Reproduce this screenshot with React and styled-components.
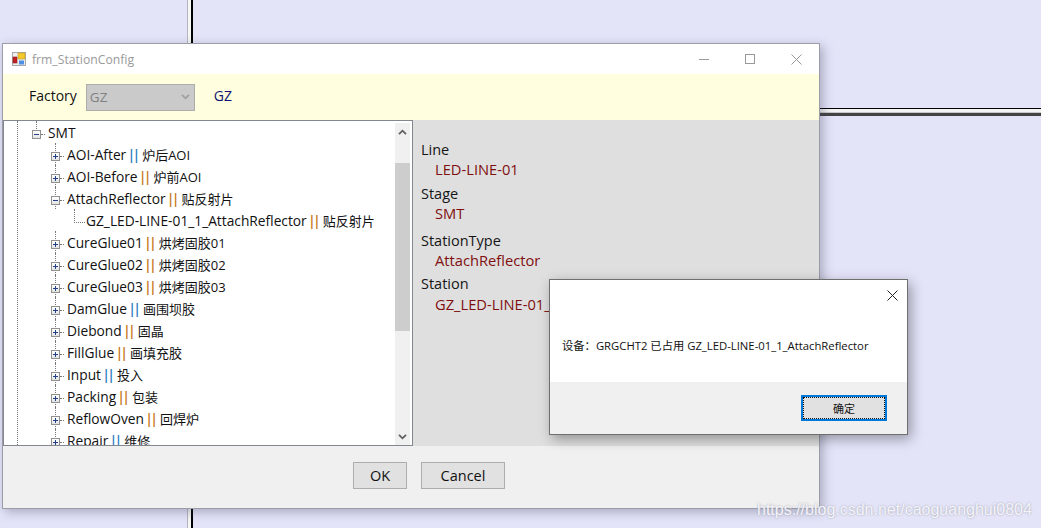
import styled, { createGlobalStyle } from "styled-components"

const GlobalStyle = createGlobalStyle`
  html, body {
    margin: 0;
    padding: 0;
    background: #e3e4f8;
  }
  body {
    font-family: "Open Sans", "Noto Sans CJK SC", sans-serif;
    overflow: hidden;
  }
`

const Desktop = styled.div`
  position: relative;
  width: 1041px;
  height: 528px;
  background: #e3e4f8;
  overflow: hidden;
`

const VLine = styled.div`
  position: absolute;
  left: 187px;
  top: 0;
  bottom: 0;
  width: 6px;
  background: linear-gradient(90deg, #b4b4c0 0 1px, #f6f6f6 1px 4px, #000 4px 6px);
`

const HLine = styled.div`
  position: absolute;
  left: 800px;
  right: 0;
  top: 108px;
  height: 8px;
  background: linear-gradient(180deg, #000 0 1px, #f4f4f4 1px 4px, #c8c8c8 4px 5px, #444 5px 8px);
`

const Window = styled.div`
  position: absolute;
  left: 2px;
  top: 43px;
  width: 818px;
  height: 466px;
  box-sizing: border-box;
  border: 1px solid #9c9ca8;
  background: #f0f0f0;
  display: flex;
  flex-direction: column;
  box-shadow: 3px 3px 10px rgba(60, 60, 90, 0.35);
`

const TitleBar = styled.div`
  height: 30px;
  flex: none;
  background: #fff;
  display: flex;
  align-items: center;
  padding-left: 9px;
  color: #9a9a9a;
  font-size: 12.2px;
`

const TitleText = styled.span`
  margin-left: 4px;
  flex: 1;
`

const WinButton = styled.div`
  width: 46px;
  height: 30px;
  display: flex;
  align-items: center;
  justify-content: center;
`

const FactoryBar = styled.div`
  height: 46px;
  flex: none;
  background: #ffffe0;
  display: flex;
  align-items: center;
  padding-left: 26px;
  font-size: 14px;
  color: #111;
`

const FactoryLabel = styled.span`
  margin-bottom: 3px;
  color: ${props => props.$color};
  margin-left: ${props => props.$left}px;
`

const FactorySelect = styled.div`
  width: 109px;
  height: 27px;
  box-sizing: border-box;
  margin-left: 9px;
  border: 1px solid #adadad;
  background: #cacaca;
  color: #808080;
  display: flex;
  align-items: center;
  justify-content: space-between;
  padding: 0 4px 0 3px;
  font-size: 13.5px;
`

const Body = styled.div`
  height: 326px;
  flex: none;
  display: flex;
  background: #dfdfdf;
`

const Tree = styled.div`
  position: relative;
  width: 410px;
  flex: none;
  box-sizing: border-box;
  border: 1px solid #828790;
  background: #fff;
  display: flex;
  overflow: hidden;
`

const TreeRows = styled.div`
  position: relative;
  flex: 1;
  overflow: hidden;

  &::before {
    content: "";
    position: absolute;
    left: 13px;
    top: 0;
    bottom: 0;
    border-left: 1px dotted #777;
  }
`

const Row = styled.div`
  position: relative;
  height: 22px;
  display: flex;
  align-items: center;
  padding-left: ${props => props.$depth * 19 + 28}px;
  font-size: 13.75px;
  color: #111;
  white-space: nowrap;

  &::before {
    content: "";
    display: ${props => (props.$depth === 1 ? "block" : "none")};
    position: absolute;
    left: 51px;
    top: 0;
    height: 22px;
    border-left: 1px dotted #777;
  }
`

const SmtStem = styled.div`
  position: absolute;
  left: 32px;
  top: 0;
  height: 8px;
  border-left: 1px dotted #777;
`

const Expander = styled.span`
  position: relative;
  z-index: 1;
  width: 9px;
  height: 9px;
  margin-top: 4px;
  box-sizing: border-box;
  border: 1px solid #919191;
  background: linear-gradient(180deg, #fff, #e4e4e4);
  flex: none;

  &::before {
    content: "";
    position: absolute;
    left: 1px;
    top: 3px;
    width: 5px;
    height: 1px;
    background: #24408c;
  }

  &::after {
    content: "";
    display: ${props => (props.$open ? "none" : "block")};
    position: absolute;
    left: 3px;
    top: 1px;
    width: 1px;
    height: 5px;
    background: #24408c;
  }
`

const Dash = styled.span`
  width: 4px;
  height: 0;
  margin: 4px 3px 0 0;
  border-top: 1px dotted #777;
  flex: none;
`

const LeafElbow = styled.span`
  align-self: flex-start;
  width: 11px;
  height: 14px;
  margin: 0 1px 0 4px;
  box-sizing: border-box;
  border-left: 1px dotted #777;
  border-bottom: 1px dotted #777;
  flex: none;
`

const Code = styled.span``

const Bars = styled.span`
  margin: 0 5px 0 1px;
  font-size: 15px;
  font-weight: 600;
  letter-spacing: -3.3px;
  color: ${props => (props.$blue ? "#2f7fc4" : "#c87a1e")};
`

const Name = styled.span`
  font-size: 13px;
`

const Scrollbar = styled.div`
  width: 15px;
  flex: none;
  margin: 2px 2px 0 0;
  background: #f0f0f0;
  display: flex;
  flex-direction: column;
`

const ScrollButton = styled.div`
  height: 17px;
  display: flex;
  align-items: center;
  justify-content: center;
  flex: none;
`

const ScrollTrack = styled.div`
  flex: 1;
  padding-top: 23px;
`

const ScrollThumb = styled.div`
  height: 168px;
  background: #cdcdcd;
`

const Details = styled.div`
  flex: 1;
  padding: 20px 0 0 8px;
  white-space: nowrap;
  font-size: 14.5px;
`

const Field = styled.div`
  margin-bottom: ${props => props.$gap}px;
`

const FieldLabel = styled.div`
  height: 20px;
  line-height: 20px;
  color: #151515;
`

const FieldValue = styled.div`
  height: 20px;
  line-height: ${props => props.$line}px;
  padding-left: 14px;
  font-size: 14.7px;
  color: #800f0f;
`

const Footer = styled.div`
  flex: 1;
  display: flex;
  padding: 16px 0 0 350px;
  gap: 14px;
  align-items: flex-start;
`

const PushButton = styled.div`
  width: ${props => props.$width}px;
  height: 27px;
  box-sizing: border-box;
  border: 1px solid #adadad;
  background: #e1e1e1;
  color: #111;
  font-size: 14.5px;
  display: flex;
  align-items: center;
  justify-content: center;
`

const Dialog = styled.div`
  position: absolute;
  left: 549px;
  top: 279px;
  width: 359px;
  height: 156px;
  box-sizing: border-box;
  border: 1px solid #6f6f6f;
  background: #f0f0f0;
  display: flex;
  flex-direction: column;
  box-shadow: 3px 4px 12px rgba(0, 0, 0, 0.35);
`

const DialogMain = styled.div`
  height: 102px;
  flex: none;
  background: #fff;
  display: flex;
  flex-direction: column;
`

const DialogClose = styled.div`
  height: 30px;
  flex: none;
  display: flex;
  justify-content: flex-end;
  align-items: center;
  padding: 0 9px 0 0;
`

const DialogText = styled.div`
  padding: 28px 0 0 12px;
  font-size: 11.3px;
  line-height: 16px;
  color: #111;
  white-space: nowrap;
`

const DialogFooter = styled.div`
  flex: 1;
  display: flex;
  justify-content: flex-end;
  padding: 13px 20px 0 0;
`

const DefaultButton = styled.div`
  width: 86px;
  height: 26px;
  box-sizing: border-box;
  border: 2px solid #0078d7;
  background: #e1e1e1;
`

const FocusRing = styled.div`
  height: 100%;
  box-sizing: border-box;
  border: 1px dotted #111;
  display: flex;
  align-items: center;
  justify-content: center;
  font-size: 11px;
  color: #111;
`

const Watermark = styled.div`
  position: absolute;
  left: 757px;
  top: 501px;
  font-family: "Liberation Sans", sans-serif;
  font-size: 16px;
  line-height: 18px;
  color: #f4f4fb;
  text-shadow: 0 0 2px #9a9aa6;
  white-space: nowrap;
`

const AppIcon = () => (
  <svg width="16" height="16" viewBox="0 0 16 16">
    <rect x="0.5" y="1.5" width="13" height="13" fill="#eee" stroke="#a8a8a8" />
    <rect x="1" y="6" width="4" height="6" fill="#c42020" stroke="#8a2020" strokeWidth="0.6" />
    <rect x="6" y="2" width="7" height="6" fill="#f6c828" stroke="#b89a30" strokeWidth="0.6" />
    <rect x="7" y="9.5" width="5" height="4" fill="#4f8fe6" />
  </svg>
)

const Chevron = ({ up, color = "#606060" }) => (
  <svg width="9" height="6" viewBox="0 0 9 6">
    <path d={up ? "M1 5.2 L4.5 1.7 L8 5.2" : "M1 0.8 L4.5 4.3 L8 0.8"} fill="none" stroke={color} strokeWidth="1.8" />
  </svg>
)

const Cross = ({ size, color }) => (
  <svg width={size} height={size} viewBox={`0 0 ${size} ${size}`}>
    <path d={`M0.5 0.5 L${size - 0.5} ${size - 0.5} M${size - 0.5} 0.5 L0.5 ${size - 0.5}`} stroke={color} strokeWidth="1" fill="none" />
  </svg>
)

const stations = [
  { code: "AOI-After", name: "炉后AOI", blue: true },
  { code: "AOI-Before", name: "炉前AOI" },
  { code: "AttachReflector", name: "贴反射片", open: true },
  { code: "GZ_LED-LINE-01_1_AttachReflector", name: "贴反射片", leaf: true },
  { code: "CureGlue01", name: "烘烤固胶01" },
  { code: "CureGlue02", name: "烘烤固胶02" },
  { code: "CureGlue03", name: "烘烤固胶03" },
  { code: "DamGlue", name: "画围坝胶", blue: true },
  { code: "Diebond", name: "固晶" },
  { code: "FillGlue", name: "画填充胶" },
  { code: "Input", name: "投入", blue: true },
  { code: "Packing", name: "包装" },
  { code: "ReflowOven", name: "回焊炉" },
  { code: "Repair", name: "维修", blue: true },
]

const fields = [
  { label: "Line", value: "LED-LINE-01", gap: 4, line: 18 },
  { label: "Stage", value: "SMT", gap: 7, line: 18 },
  { label: "StationType", value: "AttachReflector", gap: 3, line: 18 },
  { label: "Station", value: "GZ_LED-LINE-01_1_AttachReflector", gap: 0, line: 20 },
]

const App = () => {
  return (
    <Desktop>
      <GlobalStyle />
      <VLine />
      <HLine />
      <Window>
        <TitleBar>
          <AppIcon />
          <TitleText>frm_StationConfig</TitleText>
          <WinButton>
            <svg width="10" height="10" viewBox="0 0 10 10"><path d="M0 5.5 H10" stroke="#999" /></svg>
          </WinButton>
          <WinButton>
            <svg width="10" height="10" viewBox="0 0 10 10"><rect x="0.5" y="0.5" width="9" height="9" fill="none" stroke="#999" /></svg>
          </WinButton>
          <WinButton>
            <Cross size={11} color="#999" />
          </WinButton>
        </TitleBar>
        <FactoryBar>
          <FactoryLabel $color="#111" $left={0}>Factory</FactoryLabel>
          <FactorySelect>
            GZ
            <Chevron color="#a0a0a0" />
          </FactorySelect>
          <FactoryLabel $color="#101070" $left={19}>GZ</FactoryLabel>
        </FactoryBar>
        <Body>
          <Tree>
            <TreeRows>
              <Row $depth={0}>
                <SmtStem />
                <Expander $open />
                <Dash />
                SMT
              </Row>
              {stations.map(item => (
                <Row key={item.code} $depth={item.leaf ? 2 : 1}>
                  {item.leaf ? <LeafElbow /> : <><Expander $open={item.open} /><Dash /></>}
                  <Code>{item.code}</Code>
                  <Bars $blue={item.blue}>||</Bars>
                  <Name>{item.name}</Name>
                </Row>
              ))}
            </TreeRows>
            <Scrollbar>
              <ScrollButton><Chevron up /></ScrollButton>
              <ScrollTrack><ScrollThumb /></ScrollTrack>
              <ScrollButton><Chevron /></ScrollButton>
            </Scrollbar>
          </Tree>
          <Details>
            {fields.map(field => (
              <Field key={field.label} $gap={field.gap}>
                <FieldLabel>{field.label}</FieldLabel>
                <FieldValue $line={field.line}>{field.value}</FieldValue>
              </Field>
            ))}
          </Details>
        </Body>
        <Footer>
          <PushButton $width={54}>OK</PushButton>
          <PushButton $width={84}>Cancel</PushButton>
        </Footer>
      </Window>
      <Dialog>
        <DialogMain>
          <DialogClose>
            <Cross size={11} color="#222" />
          </DialogClose>
          <DialogText>设备：GRGCHT2 已占用 GZ_LED-LINE-01_1_AttachReflector</DialogText>
        </DialogMain>
        <DialogFooter>
          <DefaultButton>
            <FocusRing>确定</FocusRing>
          </DefaultButton>
        </DialogFooter>
      </Dialog>
      <Watermark>https://blog.csdn.net/caoguanghui0804</Watermark>
    </Desktop>
  )
}

export default App
